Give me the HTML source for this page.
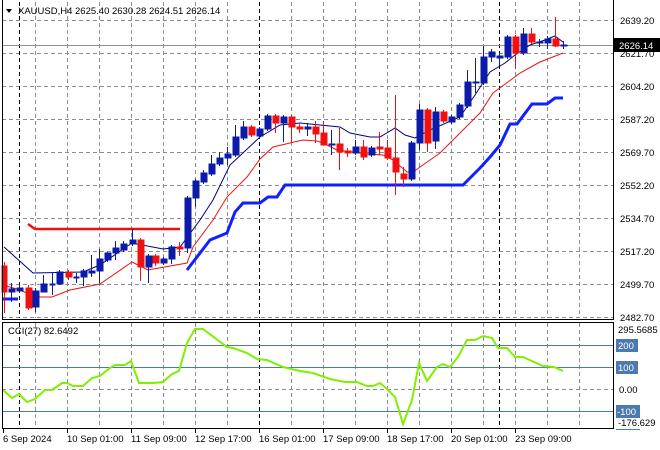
<!DOCTYPE html>
<html><head><meta charset="utf-8"><style>
html,body{margin:0;padding:0;background:#fff;width:660px;height:450px;overflow:hidden}
svg{display:block}
text{font-family:"Liberation Sans","DejaVu Sans",sans-serif;font-size:9.5px;fill:#000}
</style></head><body>
<svg width="660" height="450" viewBox="0 0 660 450" xmlns="http://www.w3.org/2000/svg">
<rect width="660" height="450" fill="#fff"/>
<g stroke="#8a8f96" stroke-width="1" stroke-dasharray="4,3" fill="none">
<path d="M2 20.5H613M2 53.5H613M2 86.5H613M2 119.5H613M2 152.5H613M2 185.5H613M2 218.5H613M2 251.5H613M2 284.5H613M2 317.5H613"/>
<path d="M35.5 2V318M67.5 2V318M99.5 2V318M131.5 2V318M163.5 2V318M195.5 2V318M227.5 2V318M291.5 2V318M323.5 2V318M355.5 2V318M387.5 2V318M419.5 2V318M451.5 2V318M483.5 2V318M515.5 2V318M547.5 2V318M579.5 2V318"/>
<path d="M35.5 323V428M67.5 323V428M99.5 323V428M131.5 323V428M163.5 323V428M195.5 323V428M227.5 323V428M291.5 323V428M323.5 323V428M355.5 323V428M387.5 323V428M419.5 323V428M451.5 323V428M483.5 323V428M515.5 323V428M547.5 323V428M579.5 323V428"/>
<path d="M2 389.5H613"/>
</g>
<g stroke="#000" stroke-width="1" stroke-dasharray="4,3"><path d="M19.5 2V318M259.5 2V318M499.5 2V318M19.5 323V428M259.5 323V428M499.5 323V428"/></g>
<path d="M2 45.5H613" stroke="#8a8f96"/>
<g stroke="#4a7ab0"><path d="M2 345.5H613M2 367.5H613M2 411.5H613"/></g>
<path d="M28 224L35 229H180" stroke="#f01010" stroke-width="2.5" fill="none"/>
<path d="M3 299H18" stroke="#1020ff" stroke-width="3" fill="none"/>
<path d="M187 270L210 240L227 233L235 212L243 203L260 203L268 197L277 197L285 185L463 185L480 168L490 157L500 145L510 124L517 124L532 104L547 104L555 98L563 98" stroke="#1020ff" stroke-width="3" fill="none"/>
<path d="M3 285L20 290L35 297L52 297L70 290L100 284L132 262L148 270L187 263L193 247L213 220L227 197L247 177L260 159L273 147L290 143L303 140L317 141L323 143L337 150L367 154L383 155L393 160L407 172L413 172L430 160L440 153L460 133L480 113L493 93L508 82L520 73L540 62L563 53" stroke="#f01010" stroke-width="1" fill="none"/>
<path d="M4 247L33 273L83 272L100 265L132 243L163 249L180 247L200 220L213 200L230 165L260 137L280 125L300 123L320 125L340 127L350 133L370 137L380 137L395 128L405 135L415 138L430 130L460 117L475 95L490 72L505 63L515 55L530 45L545 40L555 36L563 42" stroke="#000080" stroke-width="1" fill="none"/>
<g stroke-width="1">
<g stroke="#f01010" fill="#f01010">
<path d="M4.5 262V313"/><rect x="2" y="266" width="5" height="26"/>
<path d="M28.5 285V310"/><rect x="26" y="288" width="6" height="20"/>
<path d="M68.5 270V280"/><rect x="66" y="272" width="6" height="5"/>
<path d="M140.5 238V281"/><rect x="138" y="240" width="6" height="27"/>
<path d="M155.5 254V266"/><rect x="153" y="256" width="6" height="7"/>
<path d="M179.5 242V256"/><rect x="177" y="247" width="6" height="2"/>
<path d="M251.5 125V137"/><rect x="249" y="127" width="6" height="8"/>
<path d="M275.5 114V133"/><rect x="273" y="116" width="6" height="7"/>
<path d="M291.5 115V142"/><rect x="289" y="117" width="6" height="10"/>
<path d="M299.5 124V133"/><rect x="297" y="127" width="6" height="2"/>
<path d="M315.5 121V143"/><rect x="313" y="127" width="6" height="7"/>
<path d="M323.5 121V145"/><rect x="321" y="133" width="6" height="12"/>
<path d="M339.5 128V170"/><rect x="337" y="144" width="6" height="8"/>
<path d="M347.5 148V157"/><rect x="345" y="151" width="6" height="2"/>
<path d="M363.5 140V160"/><rect x="361" y="147" width="6" height="10"/>
<path d="M379.5 132V155"/><rect x="377" y="147" width="6" height="2"/>
<path d="M387.5 140V160"/><rect x="385" y="148" width="6" height="10"/>
<path d="M395.5 95V195"/><rect x="393" y="158" width="6" height="14"/>
<path d="M403.5 167V187"/><rect x="401" y="174" width="6" height="5"/>
<path d="M427.5 108V152"/><rect x="425" y="110" width="6" height="33"/>
<path d="M443.5 110V123"/><rect x="441" y="112" width="6" height="9"/>
<path d="M515.5 35V69"/><rect x="513" y="37" width="6" height="16"/>
<path d="M531.5 28V44"/><rect x="529" y="34" width="6" height="8"/>
<path d="M555.5 17V47"/><rect x="553" y="39" width="6" height="7"/>
</g>
<g stroke="#0c1aa8" fill="#0c1aa8">
<path d="M11.5 283V302"/><rect x="9" y="289" width="6" height="3"/>
<path d="M19.5 285V293"/><rect x="17" y="288" width="6" height="3"/>
<path d="M35.5 288V312"/><rect x="33" y="291" width="6" height="16"/>
<path d="M43.5 275V292"/><rect x="41" y="284" width="6" height="8"/>
<path d="M52.5 273V295"/><rect x="50" y="284" width="5" height="1"/>
<path d="M59.5 270V285"/><rect x="57" y="272" width="6" height="12"/>
<path d="M76.5 273V283"/><rect x="74" y="277" width="5" height="1"/>
<path d="M83.5 269V286"/><rect x="81" y="271" width="6" height="6"/>
<path d="M91.5 255V277"/><rect x="89" y="271" width="6" height="2"/>
<path d="M99.5 249V283"/><rect x="97" y="259" width="6" height="12"/>
<path d="M107.5 252V262"/><rect x="105" y="253" width="6" height="7"/>
<path d="M115.5 241V260"/><rect x="113" y="248" width="6" height="5"/>
<path d="M123.5 241V252"/><rect x="121" y="244" width="6" height="6"/>
<path d="M132.5 229V246"/><rect x="130" y="240" width="6" height="4"/>
<path d="M148.5 254V283"/><rect x="146" y="256" width="6" height="11"/>
<path d="M163.5 257V265"/><rect x="161" y="259" width="6" height="4"/>
<path d="M171.5 245V264"/><rect x="169" y="247" width="6" height="12"/>
<path d="M187.5 196V253"/><rect x="185" y="198" width="6" height="50"/>
<path d="M195.5 179V207"/><rect x="193" y="181" width="6" height="17"/>
<path d="M203.5 170V184"/><rect x="201" y="173" width="6" height="9"/>
<path d="M211.5 155V176"/><rect x="209" y="164" width="6" height="10"/>
<path d="M219.5 152V166"/><rect x="217" y="158" width="6" height="6"/>
<path d="M227.5 147V165"/><rect x="225" y="154" width="6" height="4"/>
<path d="M235.5 125V157"/><rect x="233" y="137" width="6" height="18"/>
<path d="M243.5 121V140"/><rect x="241" y="127" width="6" height="11"/>
<path d="M259.5 127V138"/><rect x="257" y="129" width="6" height="7"/>
<path d="M267.5 114V131"/><rect x="265" y="116" width="6" height="13"/>
<path d="M283.5 115V142"/><rect x="281" y="117" width="6" height="6"/>
<path d="M307.5 123V136"/><rect x="305" y="127" width="6" height="2"/>
<path d="M331.5 130V155"/><rect x="329" y="144" width="6" height="1"/>
<path d="M355.5 140V155"/><rect x="353" y="147" width="6" height="6"/>
<path d="M371.5 146V157"/><rect x="369" y="148" width="6" height="7"/>
<path d="M411.5 141V181"/><rect x="409" y="143" width="6" height="36"/>
<path d="M419.5 104V150"/><rect x="417" y="110" width="6" height="33"/>
<path d="M435.5 107V149"/><rect x="433" y="112" width="6" height="29"/>
<path d="M451.5 115V124"/><rect x="449" y="117" width="6" height="5"/>
<path d="M459.5 103V119"/><rect x="457" y="105" width="6" height="12"/>
<path d="M467.5 70V108"/><rect x="465" y="82" width="6" height="24"/>
<path d="M475.5 58V93"/><rect x="473" y="82" width="6" height="1"/>
<path d="M483.5 46V85"/><rect x="481" y="57" width="6" height="26"/>
<path d="M491.5 49V62"/><rect x="489" y="52" width="6" height="5"/>
<path d="M499.5 53V65"/><rect x="497" y="56" width="6" height="2"/>
<path d="M507.5 35V59"/><rect x="505" y="37" width="6" height="20"/>
<path d="M523.5 28V55"/><rect x="521" y="34" width="6" height="19"/>
<path d="M539.5 39V47"/><rect x="537" y="42" width="6" height="1"/>
<path d="M547.5 36V49"/><rect x="545" y="39" width="6" height="4"/>
<path d="M563.5 41V49"/><rect x="561" y="45" width="6" height="1"/>
</g>
</g>
<path d="M3 390L12 398L19 394L27 402L35 399L45 390L52 390L62 383L67 383L73 386L83 386L92 378L100 376L110 368L115 365L125 365L131 361L139 383L153 383L163 382L172 374L179 371L187 343L195 329L203 329L227 347L233 348L247 353L257 359L267 360L283 367L300 371L313 373L330 379L345 382L357 382L367 386L373 386L380 383L387 389L395 397L403 424L412 400L419 363L427 381L437 367L443 364L450 367L458 357L467 340L475 340L483 336L492 338L498 348L507 348L515 357L523 357L543 366L554 367L563 371" stroke="#80f000" stroke-width="2" fill="none"/>
<g stroke="#000" stroke-width="1" fill="none">
<path d="M2.5 0V319.5H613.5V0"/>
<rect x="2.5" y="322.5" width="611" height="106"/>
</g>
<path d="M6 9L12 9L9 13Z" fill="#000"/>
<text x="18" y="14">XAUUSD,H4  2625.40 2630.28 2624.51 2626.14</text>
<text x="8" y="334">CCI(27) 82.6492</text>
<g><text x="620" y="24">2639.20</text><text x="620" y="57">2621.70</text><text x="620" y="90">2604.20</text><text x="620" y="123">2587.20</text><text x="620" y="156">2569.70</text><text x="620" y="189">2552.20</text><text x="620" y="222">2534.70</text><text x="620" y="255">2517.20</text><text x="620" y="288">2499.70</text><text x="620" y="321">2482.70</text></g>
<rect x="614" y="38" width="46" height="14" fill="#000"/>
<text x="619" y="49" style="fill:#fff">2626.14</text>
<text x="618" y="333">295.5685</text>
<rect x="616" y="339" width="22" height="13" fill="#4a7ab0"/><text x="618" y="349" style="fill:#fff">200</text>
<rect x="616" y="361" width="22" height="13" fill="#4a7ab0"/><text x="618" y="371" style="fill:#fff">100</text>
<text x="619" y="393">0.00</text>
<rect x="616" y="405" width="24" height="13" fill="#4a7ab0"/><text x="617" y="415" style="fill:#fff">-100</text>
<text x="618" y="426">-176.629</text>
<path d="M616 429.5H640" stroke="#4a7ab0"/>
<g stroke="#000"><path d="M3.5 429V433M67.5 429V433M131.5 429V433M195.5 429V433M259.5 429V433M323.5 429V433M387.5 429V433M451.5 429V433M515.5 429V433"/></g>
<text x="3" y="442">6 Sep 2024</text><text x="67" y="442">10 Sep 01:00</text><text x="131" y="442">11 Sep 09:00</text><text x="195" y="442">12 Sep 17:00</text><text x="259" y="442">16 Sep 01:00</text><text x="323" y="442">17 Sep 09:00</text><text x="387" y="442">18 Sep 17:00</text><text x="451" y="442">20 Sep 01:00</text><text x="515" y="442">23 Sep 09:00</text>
</svg>
</body></html>
